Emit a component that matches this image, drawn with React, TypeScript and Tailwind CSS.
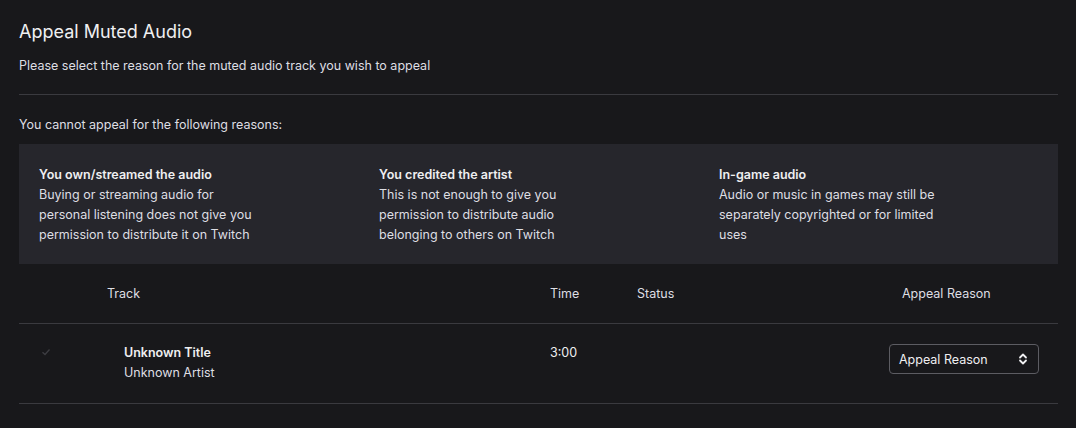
import React from "react";

const reasons = [
  {
    title: "You own/streamed the audio",
    body: "Buying or streaming audio for personal listening does not give you permission to distribute it on Twitch",
  },
  {
    title: "You credited the artist",
    body: "This is not enough to give you permission to distribute audio belonging to others on Twitch",
  },
  {
    title: "In-game audio",
    body: "Audio or music in games may still be separately copyrighted or for limited uses",
  },
];

export default function App() {
  return (
    <div
      className="min-h-[428px] w-full bg-[#18181b] text-[#efeff1] px-[19px] pt-[20px]"
      style={{ fontFamily: "Inter, 'Noto Sans', sans-serif" }}
    >
      <div className="w-[1039px]">
        <h1 className="text-[18px] leading-[24px] font-normal text-[#efeff1]">Appeal Muted Audio</h1>
        <p className="mt-[13px] text-[12.5px] leading-[18px] text-[#dedee3]">
          Please select the reason for the muted audio track you wish to appeal
        </p>
        <div className="mt-[19px] h-px bg-[#3a3a3f]" />
        <p className="mt-[21px] text-[12.5px] leading-[18px] text-[#dedee3]">
          You cannot appeal for the following reasons:
        </p>
        <div className="mt-[10px] grid grid-cols-[340px_340px_339px] bg-[#26262c] pl-[20px] pt-[21px] pb-[19px]">
          {reasons.map((r) => (
            <div key={r.title} className="text-[12.5px] leading-[20px]">
              <div className="font-semibold text-[#efeff1]">{r.title}</div>
              <div className="w-[226px] text-[#dedee3]">{r.body}</div>
            </div>
          ))}
        </div>
        <div className="grid grid-cols-[88px_443px_87px_252px_169px] text-[12.5px] leading-[18px] text-[#dedee3] h-[60px] items-center border-b border-[#3a3a3f]">
          <div />
          <div>Track</div>
          <div>Time</div>
          <div>Status</div>
          <div className="pl-[13px]">Appeal Reason</div>
        </div>
        <div className="grid grid-cols-[88px_443px_87px_252px_169px] text-[12.5px] leading-[20px] h-[80px] border-b border-[#3a3a3f]">
          <div className="pt-[23px] pl-[22px]">
            <svg width="10" height="10" viewBox="0 0 10 10" fill="none">
              <path d="M1.5 5.2 L4 7.5 L8.5 2.5" stroke="#3d3d42" strokeWidth="1.3" />
            </svg>
          </div>
          <div className="pl-[17px] pt-[19px]">
            <div className="font-semibold text-[#efeff1]">Unknown Title</div>
            <div className="text-[#dedee3]">Unknown Artist</div>
          </div>
          <div className="pt-[19px] text-[#efeff1]">3:00</div>
          <div />
          <div className="pt-[20px]">
            <div className="flex h-[30px] w-[150px] items-center justify-between rounded-[4px] border border-[#5c5c62] bg-[#18181b] pl-[9px] pr-[10px] text-[#efeff1]">
              <span className="pt-[1px]">Appeal Reason</span>
              <svg width="10" height="14" viewBox="0 0 10 14" fill="none">
                <path d="M2 5.5 L5 2.5 L8 5.5" stroke="#efeff1" strokeWidth="1.8" strokeLinecap="round" strokeLinejoin="round" />
                <path d="M2 8.5 L5 11.5 L8 8.5" stroke="#efeff1" strokeWidth="1.8" strokeLinecap="round" strokeLinejoin="round" />
              </svg>
            </div>
          </div>
        </div>
      </div>
    </div>
  );
}
